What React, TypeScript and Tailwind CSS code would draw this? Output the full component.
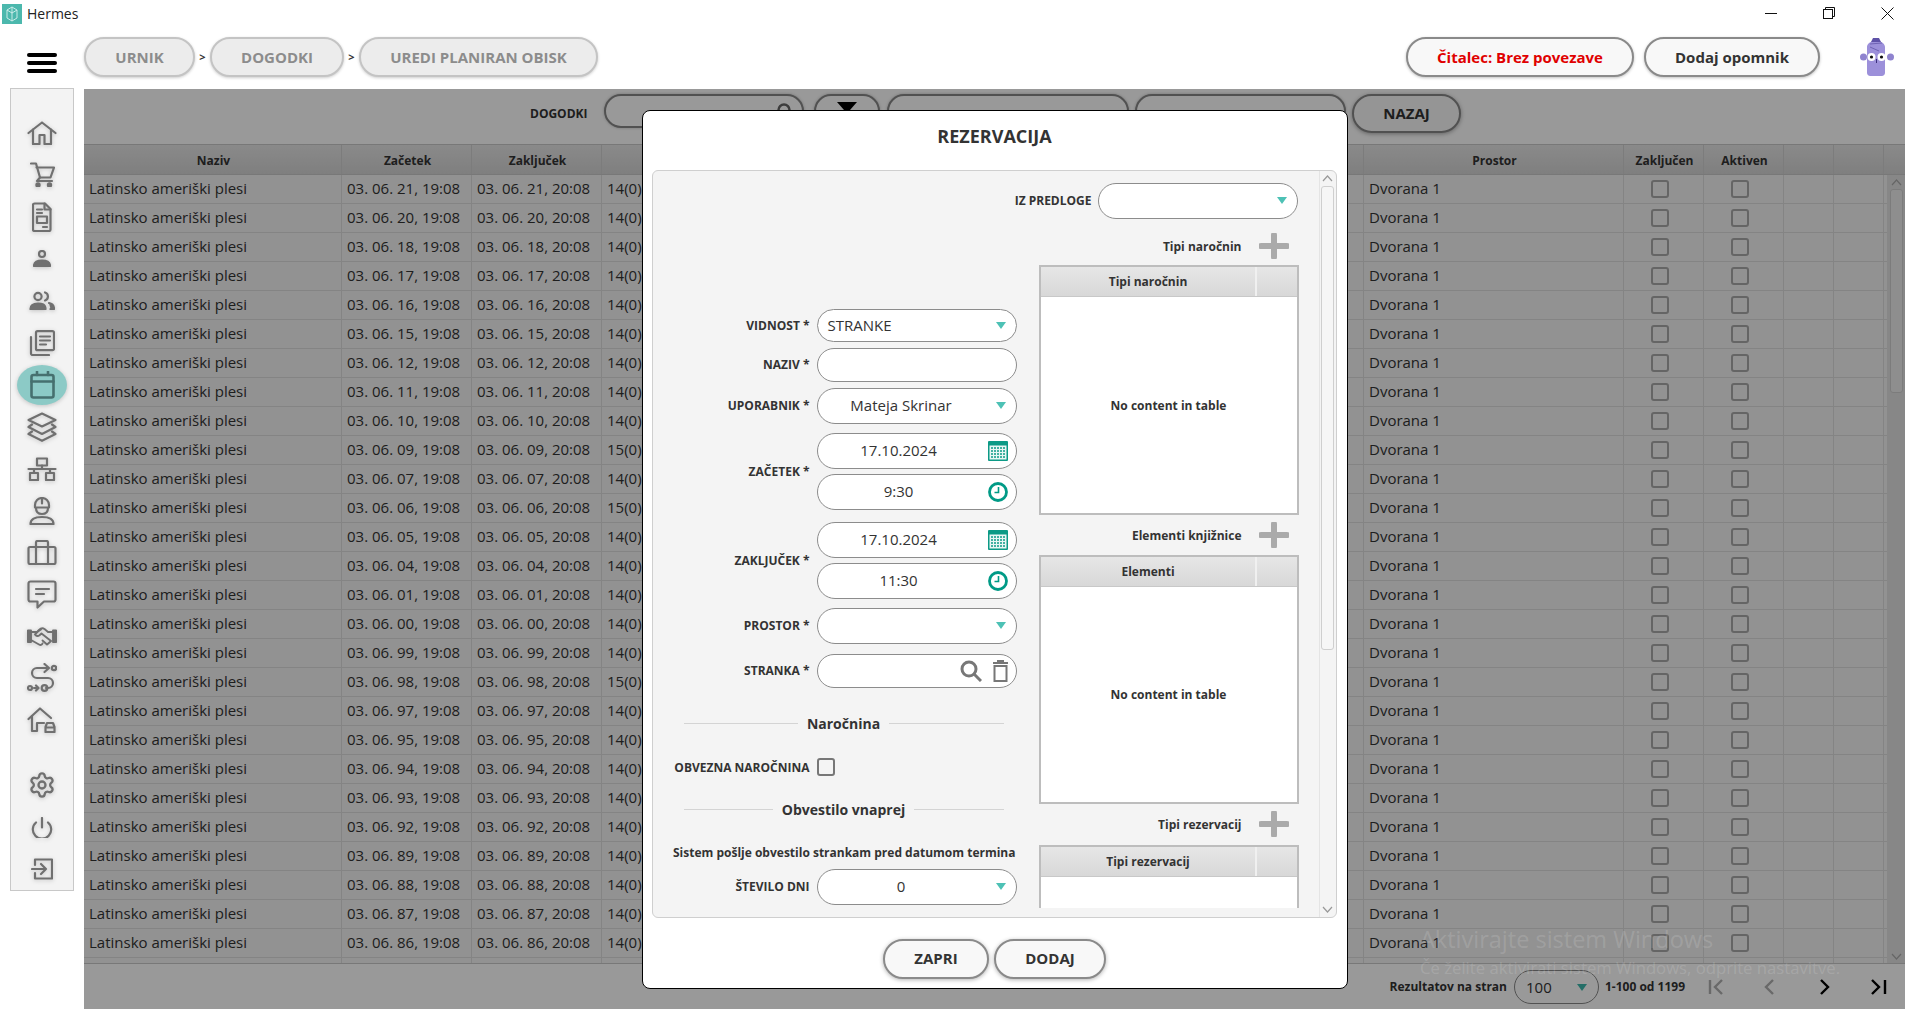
import React from "react";
import { Settings } from "lucide-react";

const days = ["21","20","18","17","16","15","12","11","10","09","07","06","05","04","01","00","99","98","97","95","94","93","92","89","88","87","86","85"];
const fifteen = ["09","06","98"];

function Svg({ w, h, children, stroke = "#707070", sw = 2.2 }: { w: number; h: number; children: React.ReactNode; stroke?: string; sw?: number }) {
  return (
    <svg width={w} height={h} viewBox={`0 0 ${w} ${h}`} fill="none" stroke={stroke} strokeWidth={sw} strokeLinecap="round" strokeLinejoin="round">
      {children}
    </svg>
  );
}

const sideIcons: React.ReactNode[] = [
  <Svg w={30} h={24}><path d="M1.5 12 15 1.5 28.5 12" /><path d="M6 8.5V23h6.5v-9h5v9H24V8.5" /></Svg>,
  <Svg w={25} h={25}><path d="M1 1.5h5l4 14-3 3.5h15" /><path d="M6.5 5.5H24l-3.500 10H10" /><circle cx="8" cy="23" r="1.600" fill="#707070" /><circle cx="19.500" cy="23" r="1.600" fill="#707070" /></Svg>,
  <Svg w={20} h={30}><path d="M2.500 1.500H13L18.500 7v20.500a1.500 1.500 0 0 1-1.500 1.500H2.500A1.500 1.500 0 0 1 1 27.500V3a1.500 1.500 0 0 1 1.500-1.500Z" /><path d="M5 7.500h5M5 11h5M12.500 1.500V7.500h6" /><rect x="5" y="14.500" width="10" height="6.500" /><path d="M11 25h4" /></Svg>,
  <Svg w={18} h={17}><circle cx="9" cy="4" r="3" /><path d="M1 16c0-4 4-5.500 8-5.500s8 1.500 8 5.500Z" fill="#707070" /></Svg>,
  <Svg w={26} h={19}><circle cx="9" cy="5.500" r="3.600" /><path d="M1.500 18c0-4.500 3.500-5.500 7.500-5.500s7.500 1 7.500 5.500Z" fill="#707070" /><path d="M16 1.500a4.200 4.200 0 0 1 0 8" /><path d="M20 12c3 .5 5 2.500 5 6h-3.500" fill="#707070" /></Svg>,
  <Svg w={26} h={26}><rect x="7" y="1.200" width="18" height="19" rx="1.500" /><path d="M11 6.500h10M11 10.500h10M11 14.500h6" /><path d="M2 7v16.500a1.500 1.500 0 0 0 1.500 1.500H20" /></Svg>,
  null,
  <Svg w={30} h={30}><path d="M15 1.500 28.500 8 15 14.500 1.500 8Z" /><path d="M5 12.500 1.500 15 15 22 28.500 15 25 12.500" /><path d="M5 19.500 1.500 22 15 28.800 28.500 22 25 19.500" /></Svg>,
  <Svg w={30} h={24}><rect x="10" y="1.500" width="10" height="7" /><path d="M15 8.500V12M1.500 12h27M7 12v3M23 12v3" /><rect x="3" y="16" width="8" height="7" /><rect x="19" y="16" width="8" height="7" /></Svg>,
  <Svg w={26} h={28}><path d="M6 10.500V8a7 7 0 0 1 14 0v2.500Z" /><path d="M13 1.500v5" /><path d="M7 11c0 4.500 3 6 6 6s6-1.500 6-6" /><path d="M1.500 27c0-5 5-7 11.500-7s11.500 2 11.500 7Z" /></Svg>,
  <Svg w={30} h={25}><rect x="1.500" y="7" width="27" height="17" rx="1.500" /><path d="M9 24V2.500A1.500 1.500 0 0 1 10.500 1h9A1.500 1.500 0 0 1 21 2.500V24" /></Svg>,
  <Svg w={30} h={29}><path d="M3.500 1.500h23a2 2 0 0 1 2 2v16a2 2 0 0 1-2 2H17l-6.500 6v-6h-7a2 2 0 0 1-2-2v-16a2 2 0 0 1 2-2Z" /><path d="M9 9h13M9 14h8" /></Svg>,
  <Svg w={30} h={19} sw={1.900}>
    <path d="M.8 3.500H4V15H.8ZM26 3.500h3.200V15H26Z" fill="#707070" />
    <path d="M4 5h6l4-2.500" />
    <path d="M26 5h-5l-3.500-3C15.500.8 13.500 1.500 12 3L8 7.500c1 1.800 3 2 4.500.8l2-1.800L24 14" />
    <path d="M4 13l8 4.500c1.500.9 3 .5 3.500-1" />
    <path d="M20 17.500l-4.500-4M23.500 14.500l-2.800 2.500" />
  </Svg>,
  <Svg w={30} h={30}><path d="M20 5H10a5 5 0 0 0 0 10h11a5 5 0 0 1 0 10h-2" /><path d="M17.500 1 22 5l-4.500 4" /><circle cx="27" cy="5" r="2.200" /><circle cx="3" cy="25" r="2" /><path d="M7 25h4M9 22.500 11.500 25 9 27.500" /><circle cx="17.500" cy="25" r="2.800" /></Svg>,
  <Svg w={30} h={26}><path d="M1.500 12 13 1.500l11 9.500" /><path d="M5 9v15h4M10 24v-8h7" /><path d="M18.500 25v-5l1.500-4h6l1.500 4v5ZM18.500 20.500h9" /></Svg>,
];

const bottomIcons: React.ReactNode[] = [
  <Settings className="w-[28px] h-[28px]" color="#707070" strokeWidth={2} />,
  <Svg w={22} h={21}><path d="M11 1v9.500" /><path d="M5 5.500a9.200 9.200 0 1 0 12 0" /></Svg>,
  <Svg w={22} h={22}><path d="M4 7V1.500h17v19H4V15" /><path d="M1 11h14M10 6l5 5-5 5" /></Svg>,
];

function Sidebar() {
  return (
    <div className="w-[64px] h-[803px] bg-[#f3f3f3] border border-[#c8c8c8] pt-[23px] flex flex-col items-center">
      {sideIcons.map((icon, i) => (
        <div key={i} className="relative h-[42px] w-full flex items-center justify-center drop-shadow-[0_1px_2px_rgba(0,0,0,0.2)]">
          {icon === null ? (
            <div className="w-[50px] h-[40px] rounded-[50%] bg-[#8ccac6] flex items-center justify-center">
              <Svg w={25} h={28} stroke="#46706f" sw={2.600}>
                <rect x="1.500" y="4" width="22" height="22.500" rx="2" />
                <path d="M1.500 10.500h22M7 .800V4M18 .800V4" />
              </Svg>
            </div>
          ) : (
            icon
          )}
        </div>
      ))}
      <div className="h-[23px]" />
      {bottomIcons.map((icon, i) => (
        <div key={i} className="h-[42px] w-full flex items-center justify-center drop-shadow-[0_1px_2px_rgba(0,0,0,0.2)]">
          {icon}
        </div>
      ))}
    </div>
  );
}

function Crumb({ className, children }: { className: string; children: React.ReactNode }) {
  return (
    <div className={`h-[40px] rounded-full bg-[#ececec] border-2 border-[#c4c4c4] flex items-center justify-center text-[15px] font-bold text-[#8c8c8c] shadow-[0_1px_3px_rgba(0,0,0,0.2)] ${className}`}>
      {children}
    </div>
  );
}

function Sep() {
  return <div className="w-[15px] text-center text-[11px] font-bold text-[#333]">&gt;</div>;
}

function TitleBar() {
  return (
    <div className="h-[28px] flex items-start justify-between pt-[3px] pl-[2px] pr-[3px]">
      <div className="flex items-center gap-[5px]">
        <svg width="20" height="20" viewBox="0 0 20 20">
          <rect width="20" height="20" fill="#4cb8ad" />
          <path d="M10 3l5 3v8l-5 3-5-3V6Z M10 3v14 M5 6l5 3 5-3" fill="none" stroke="#d6f1ee" strokeWidth="0.900" />
        </svg>
        <span className="text-[14px] text-[#222] leading-[20px] pt-[1px]">Hermes</span>
      </div>
      <div className="flex items-center h-[20px]">
        <div className="w-[58px] flex justify-center">
          <div className="w-[12px] h-px bg-[#111]" />
        </div>
        <div className="w-[58px] flex justify-center">
          <svg width="12" height="12" viewBox="0 0 12 12" fill="none" stroke="#111" strokeWidth="1">
            <rect x="0.500" y="2.500" width="9" height="9" />
            <path d="M2.500 2.500V.5h9v9H9.500" />
          </svg>
        </div>
        <div className="w-[58px] flex justify-center">
          <svg width="13" height="13" viewBox="0 0 13 13" stroke="#111" strokeWidth="1">
            <path d="M.5.5l12 12M12.500.5l-12 12" />
          </svg>
        </div>
      </div>
    </div>
  );
}

function Mascot() {
  return (
    <svg width="36" height="38" viewBox="0 0 36 38">
      <circle cx="4.500" cy="19" r="3.500" fill="#8f83cf" />
      <circle cx="31.500" cy="19" r="3.500" fill="#8f83cf" />
      <path d="M8 35V9c0-3 3-5 6-6l3-3 3 3c3 1 6 3 6 6v26c0 2-2 3-3 3H11c-1 0-3-1-3-3Z" fill="#9c90da" />
      <path d="M11 6l12-1M11 9l9 4" stroke="#6f62b4" strokeWidth="1" fill="none" />
      <path d="M14 0h6l2 4H12Z" fill="#5f52a8" />
      <circle cx="12.500" cy="19" r="4" fill="#fff" />
      <circle cx="22.500" cy="19" r="4" fill="#fff" />
      <circle cx="12.500" cy="19" r="1.600" fill="#111" />
      <circle cx="22.500" cy="19" r="1.600" fill="#111" />
      <path d="M17.500 21v4" stroke="#3b2f7a" strokeWidth="1" />
    </svg>
  );
}

function Header() {
  return (
    <div className="h-[60px] pt-[9px] flex items-start pr-[24px]">
      <div className="w-[84px] h-[40px] pl-[27px] pt-[12px] flex flex-col justify-center gap-[4px]">
        <div className="w-[30px] h-[4px] rounded-full bg-black" />
        <div className="w-[30px] h-[4px] rounded-full bg-black" />
        <div className="w-[30px] h-[4px] rounded-full bg-black" />
      </div>
      <div className="flex items-center">
        <Crumb className="w-[111px]">URNIK</Crumb>
        <Sep />
        <Crumb className="w-[134px]">DOGODKI</Crumb>
        <Sep />
        <Crumb className="w-[239px]">UREDI PLANIRAN OBISK</Crumb>
      </div>
      <div className="ml-auto flex items-center">
        <div className="w-[228px] h-[40px] rounded-full bg-[#f8f8f8] border-2 border-[#8a8a8a] flex items-center justify-center text-[15px] font-bold text-[#e00000] shadow-[0_1px_3px_rgba(0,0,0,0.25)]">Čitalec: Brez povezave</div>
        <div className="ml-[10px] w-[176px] h-[40px] rounded-full bg-[#f8f8f8] border-2 border-[#8a8a8a] flex items-center justify-center text-[15px] font-bold text-[#333] shadow-[0_1px_3px_rgba(0,0,0,0.25)]">Dodaj opomnik</div>
        <div className="ml-[39px]"><Mascot /></div>
      </div>
    </div>
  );
}

function Toolbar() {
  const pill = "h-[34px] rounded-full bg-white border-2 border-[#888] shadow-[0_0_3px_rgba(0,0,0,0.25)]";
  return (
    <div className="h-[55px] pt-[5px] flex items-start bg-white">
      <div className="w-[520px] h-[34px] pl-[446px] pt-[5px] flex items-center text-[12px] font-bold text-[#333]">DOGODKI</div>
      <div className={`${pill} w-[200px] flex items-center justify-end pr-[8px]`}>
        <svg width="18" height="18" viewBox="0 0 18 18" fill="none" stroke="#666" strokeWidth="2.500"><circle cx="8" cy="8" r="5.500" /><path d="M12 12l5 5" /></svg>
      </div>
      <div className={`${pill} w-[66px] ml-[10px] flex items-center justify-center`}>
        <svg width="20" height="18" viewBox="0 0 20 18" fill="#000"><path d="M0 0h20l-7 8v10l-6-3V8Z" /></svg>
      </div>
      <div className={`${pill} w-[242px] ml-[7px]`} />
      <div className={`${pill} w-[211px] ml-[6px]`} />
      <div className="w-[109px] h-[39px] ml-[6px] rounded-full bg-[#f8f8f8] border-2 border-[#888] flex items-center justify-center text-[15px] font-bold text-[#333] shadow-[0_1px_4px_rgba(0,0,0,0.35)]">NAZAJ</div>
    </div>
  );
}

const colW = ["w-[258px]", "w-[130px]", "w-[130px]", "w-[762px]", "w-[260px]", "w-[80px]", "w-[80px]", "w-[50px]", "w-[50px]"];

function HeadCell({ i, children }: { i: number; children?: React.ReactNode }) {
  return (
    <div className={`${colW[i]} h-full shrink-0 border-r border-[#cfcfcf] pt-[2px] pl-[2px] flex items-center justify-center text-[12px] font-bold text-[#333]`}>
      {children}
    </div>
  );
}

function Chk() {
  return <div className="w-[18px] h-[18px] rounded-[3px] border-2 border-[#a8a8a8] bg-[#f3f3f3]" />;
}

function Row({ d }: { d: string }) {
  const cell = "h-full shrink-0 border-r border-[#dcdcdc] flex items-center";
  const n = fifteen.includes(d) ? "15(0)" : "14(0)";
  return (
    <div className="h-[29px] shrink-0 flex border-b border-[#dcdcdc] bg-[#f3f3f3] text-[15px] text-[#333]">
      <div className={`${cell} ${colW[0]} pl-[5px] pb-[2px]`}>Latinsko ameriški plesi</div>
      <div className={`${cell} ${colW[1]} pl-[5px] pb-[2px]`}>03. 06. {d}, 19:08</div>
      <div className={`${cell} ${colW[2]} pl-[5px] pb-[2px]`}>03. 06. {d}, 20:08</div>
      <div className={`${cell} ${colW[3]} pl-[5px] pb-[2px]`}>{n}</div>
      <div className={`${cell} ${colW[4]} pl-[5px] pb-[2px]`}>Dvorana 1</div>
      <div className={`${cell} ${colW[5]} pl-[27px]`}><Chk /></div>
      <div className={`${cell} ${colW[6]} pl-[27px]`}><Chk /></div>
      <div className={`${cell} ${colW[7]}`} />
      <div className={`${cell} ${colW[8]}`} />
    </div>
  );
}

function Chevron({ dir, color = "#999" }: { dir: "up" | "down"; color?: string }) {
  return (
    <svg width="11" height="7" viewBox="0 0 11 7" fill="none" stroke={color} strokeWidth="1.200">
      <path d={dir === "up" ? "M1 6l4.500-5L10 6" : "M1 1l4.500 5L10 1"} />
    </svg>
  );
}

function Table() {
  return (
    <div className="h-[820px] flex flex-col border-t border-[#c8c8c8] border-b bg-[#f3f3f3] overflow-hidden">
      <div className="h-[30px] shrink-0 flex border-b border-[#c8c8c8] bg-gradient-to-b from-[#e6e6e6] to-[#d4d4d4]">
        <HeadCell i={0}>Naziv</HeadCell>
        <HeadCell i={1}>Začetek</HeadCell>
        <HeadCell i={2}>Zaključek</HeadCell>
        <HeadCell i={3} />
        <HeadCell i={4}>Prostor</HeadCell>
        <HeadCell i={5}>Zaključen</HeadCell>
        <HeadCell i={6}>Aktiven</HeadCell>
        <HeadCell i={7} />
        <HeadCell i={8} />
      </div>
      <div className="flex-1 flex min-h-0">
        <div className="flex-1 min-w-0 flex flex-col overflow-hidden">
          {days.map((d) => <Row key={d} d={d} />)}
        </div>
        <div className="w-[18px] shrink-0 bg-[#e2e2e2] flex flex-col items-center pt-[4px] pb-[3px]">
          <Chevron dir="up" color="#aaa" />
          <div className="mt-[3px] w-[13px] h-[204px] rounded-[3px] bg-[#ededed] border border-[#cfcfcf]" />
          <div className="flex-1" />
          <Chevron dir="down" color="#aaa" />
        </div>
      </div>
    </div>
  );
}

function PageIcon({ kind, color }: { kind: "first" | "prev" | "next" | "last"; color: string }) {
  const d = {
    first: "M2 2v14M14 2L7 9l7 7",
    prev: "M11 2L4 9l7 7",
    next: "M5 2l7 7-7 7",
    last: "M2 2l7 7-7 7M15 2v14",
  }[kind];
  return (
    <div className="w-[54px] flex justify-center">
      <svg width="17" height="18" viewBox="0 0 17 18" fill="none" stroke={color} strokeWidth="2.400"><path d={d} /></svg>
    </div>
  );
}

function Footer() {
  return (
    <div className="h-[45px] pt-[1px] flex items-center justify-end bg-white">
      <span className="text-[12px] font-bold text-[#333]">Rezultatov na stran</span>
      <div className="ml-[7px] w-[85px] h-[34px] rounded-full border border-[#888] flex items-center text-[15px] text-[#333] pl-[11px]">
        <span className="flex-1">100</span>
        <svg className="mr-[11px]" width="10" height="7" viewBox="0 0 10 7"><path d="M0 0h10L5 7Z" fill="#3cb8ac" /></svg>
      </div>
      <span className="ml-[6px] mr-[4px] text-[12px] font-bold text-[#333]">1-100 od 1199</span>
      <PageIcon kind="first" color="#b0b0b0" />
      <PageIcon kind="prev" color="#b0b0b0" />
      <PageIcon kind="next" color="#000" />
      <PageIcon kind="last" color="#000" />
    </div>
  );
}

function Arrow({ className = "" }: { className?: string }) {
  return (
    <svg className={className} width="10" height="7" viewBox="0 0 10 7"><path d="M0 0h10L5 7Z" fill="#4dc1b5" /></svg>
  );
}

const field = "rounded-full border-[1.500px] border-[#8c8c8c] bg-white flex items-center text-[15px] text-[#333] w-[200px]";

function Label({ children }: { children: React.ReactNode }) {
  return <div className="w-[157px] shrink-0 pt-[1px] text-right text-[12px] font-bold text-[#333] mr-[7px] whitespace-nowrap">{children}</div>;
}

function SelectField({ className, children }: { className: string; children?: React.ReactNode }) {
  return (
    <div className={`${field} ${className}`}>
      <div className="flex-1 text-center">{children}</div>
      <Arrow className="ml-[11px] mr-[10px]" />
    </div>
  );
}

function CalIcon() {
  return (
    <svg className="ml-[8px] mr-[8px]" width="20" height="21" viewBox="0 0 20 21">
      <rect x="0" y="1" width="20" height="20" rx="1" fill="#0c9a86" />
      <rect x="1.500" y="5.500" width="17" height="14" fill="#e9f6f4" />
      <path d="M3 8h14M3 11h14M3 14h14M3 17h14" stroke="#0c9a86" strokeWidth="1.600" strokeDasharray="2 1" />
    </svg>
  );
}

function ClockIcon() {
  return (
    <svg className="ml-[8px] mr-[8px]" width="20" height="20" viewBox="0 0 20 20" fill="none" stroke="#009a86">
      <circle cx="10" cy="10" r="8.500" strokeWidth="2.800" />
      <path d="M10.500 5v5.500H6.500" strokeWidth="1.600" />
    </svg>
  );
}

function DateField({ className, children, icon }: { className: string; children: React.ReactNode; icon: React.ReactNode }) {
  return (
    <div className={`${field} ${className}`}>
      <div className="flex-1 text-center">{children}</div>
      {icon}
    </div>
  );
}

function Section({ children, className }: { children: React.ReactNode; className: string }) {
  return (
    <div className={`ml-[31px] w-[320px] h-[20px] flex items-center gap-[9px] text-[14px] font-bold text-[#333] ${className}`}>
      <div className="flex-1 h-px bg-[#d4d4d4]" />
      <span>{children}</span>
      <div className="flex-1 h-px bg-[#d4d4d4]" />
    </div>
  );
}

function FormColumn() {
  return (
    <div className="w-[386px] shrink-0 pt-[90px] flex flex-col">
      <div className="flex items-center">
        <Label>VIDNOST *</Label>
        <div className={`${field} h-[33px] pl-[10px]`}>
          <span className="flex-1">STRANKE</span>
          <Arrow className="mr-[10px]" />
        </div>
      </div>
      <div className="flex items-center mt-[6px]">
        <Label>NAZIV *</Label>
        <div className={`${field} h-[34px]`} />
      </div>
      <div className="flex items-center mt-[6px]">
        <Label>UPORABNIK *</Label>
        <SelectField className="h-[36px]">Mateja Skrinar</SelectField>
      </div>
      <div className="flex items-center mt-[9px]">
        <Label>ZAČETEK *</Label>
        <div className="flex flex-col gap-[5px]">
          <DateField className="h-[36px]" icon={<CalIcon />}>17.10.2024</DateField>
          <DateField className="h-[36px]" icon={<ClockIcon />}>9:30</DateField>
        </div>
      </div>
      <div className="flex items-center mt-[12px]">
        <Label>ZAKLJUČEK *</Label>
        <div className="flex flex-col gap-[5px]">
          <DateField className="h-[36px]" icon={<CalIcon />}>17.10.2024</DateField>
          <DateField className="h-[36px]" icon={<ClockIcon />}>11:30</DateField>
        </div>
      </div>
      <div className="flex items-center mt-[9px]">
        <Label>PROSTOR *</Label>
        <SelectField className="h-[36px]" />
      </div>
      <div className="flex items-center mt-[10px]">
        <Label>STRANKA *</Label>
        <div className={`${field} h-[34px] justify-end pr-[7px] gap-[10px]`}>
          <svg width="22" height="22" viewBox="0 0 22 22" fill="none" stroke="#777" strokeWidth="3"><circle cx="9" cy="9" r="7" /><path d="M14 14l7 7" /></svg>
          <svg width="17" height="22" viewBox="0 0 17 22" fill="none" stroke="#777"><path d="M1 3h15M5 1h7" strokeWidth="2" /><rect x="2.500" y="6" width="12" height="15" strokeWidth="2" /></svg>
        </div>
      </div>
      <Section className="mt-[26px]">Naročnina</Section>
      <div className="flex items-center mt-[24px]">
        <Label>OBVEZNA NAROČNINA</Label>
        <div className="w-[18px] h-[18px] rounded-[3px] border-2 border-[#777] bg-[#f4f4f4]" />
      </div>
      <Section className="mt-[23px]">Obvestilo vnaprej</Section>
      <div className="mt-[23px] h-[20px] w-[363px] flex items-center justify-end text-[12px] font-bold text-[#333] whitespace-nowrap">Sistem pošlje obvestilo strankam pred datumom termina</div>
      <div className="flex items-center mt-[6px]">
        <Label>ŠTEVILO DNI</Label>
        <SelectField className="h-[36px]">0</SelectField>
      </div>
    </div>
  );
}

function PlusRow({ label, className, labelClass }: { label: string; className: string; labelClass: string }) {
  return (
    <div className={`flex items-center justify-end pr-[10px] ${className}`}>
      <span className={`text-[12px] font-bold text-[#333] mr-[17px] ${labelClass}`}>{label}</span>
      <svg width="30" height="26" viewBox="0 0 30 26"><path d="M15 2v22M2 13h26" stroke="#aaa" strokeWidth="6" strokeLinecap="round" /></svg>
    </div>
  );
}

function SubTable({ title, className }: { title: string; className: string }) {
  return (
    <div className={`w-[260px] shrink-0 border-2 border-[#bdbdbd] bg-white flex flex-col ${className}`}>
      <div className="h-[30px] shrink-0 flex border-b border-[#c8c8c8] bg-gradient-to-b from-[#e6e6e6] to-[#d8d8d8]">
        <div className="w-[216px] h-full pt-[2px] pl-[1px] flex items-center justify-center border-r-2 border-[#f0f0f0] text-[12px] font-bold text-[#333]">{title}</div>
      </div>
      <div className="flex-1 flex items-center justify-center pt-[2px] text-[12px] font-bold text-[#333]">No content in table</div>
    </div>
  );
}

function RightColumn() {
  return (
    <div className="w-[260px] shrink-0 flex flex-col">
      <PlusRow label="Tipi naročnin" className="h-[46px] pt-[8px]" labelClass="pt-[2px]" />
      <SubTable title="Tipi naročnin" className="h-[250px]" />
      <PlusRow label="Elementi knjižnice" className="h-[40px]" labelClass="pt-[2px]" />
      <SubTable title="Elementi" className="h-[249px]" />
      <PlusRow label="Tipi rezervacij" className="h-[41px]" labelClass="pt-[2px]" />
      <SubTable title="Tipi rezervacij" className="h-[250px]" />
    </div>
  );
}

function Modal() {
  return (
    <div className="w-[706px] h-[879px] rounded-[8px] border border-black bg-white flex flex-col items-center">
      <div className="h-[59px] shrink-0 w-full flex items-center justify-center text-[18px] font-bold text-[#333] pb-[8px]">REZERVACIJA</div>
      <div className="w-[685px] h-[748px] -ml-[1px] rounded-[6px] border border-[#cfcfcf] bg-[#f4f4f4] flex overflow-hidden shrink-0">
        <div className="flex-1 min-w-0 pb-[9px] flex flex-col">
          <div className="flex-1 min-h-0 overflow-hidden pt-[12px]">
            <div className="h-[36px] flex items-center justify-end pr-[21px]">
              <span className="text-[12px] font-bold text-[#333] pt-[1px] mr-[6px]">IZ PREDLOGE</span>
              <SelectField className="h-[36px]" />
            </div>
            <div className="flex">
              <FormColumn />
              <RightColumn />
            </div>
          </div>
        </div>
        <div className="w-[17px] shrink-0 border-l border-[#e4e4e4] flex flex-col items-center pt-[4px] pb-[4px]">
          <Chevron dir="up" />
          <div className="mt-[4px] w-[13px] h-[464px] rounded-[3px] bg-[#f6f6f6] border border-[#cfcfcf]" />
          <div className="flex-1" />
          <Chevron dir="down" />
        </div>
      </div>
      <div className="flex-1 flex items-start pt-[21px] gap-[5px]">
        <div className="w-[106px] h-[40px] rounded-full bg-[#f8f8f8] border-2 border-[#8a8a8a] flex items-center justify-center text-[15px] font-bold text-[#333] shadow-[0_1px_4px_rgba(0,0,0,0.3)]">ZAPRI</div>
        <div className="w-[112px] h-[40px] rounded-full bg-[#f8f8f8] border-2 border-[#8a8a8a] flex items-center justify-center text-[15px] font-bold text-[#333] shadow-[0_1px_4px_rgba(0,0,0,0.3)]">DODAJ</div>
      </div>
    </div>
  );
}

export default function App() {
  return (
    <div className="w-[1919px] h-[1023px] overflow-hidden bg-white font-['Open_Sans',sans-serif]">
      <TitleBar />
      <Header />
      <div className="flex">
        <div className="w-[84px] shrink-0 pl-[10px]">
          <Sidebar />
        </div>
        <div className="relative w-[1821px] h-[920px] mt-[1px] bg-white overflow-hidden">
          <Toolbar />
          <Table />
          <Footer />
          <div className="absolute inset-0 bg-black/40 flex items-center justify-center">
            <Modal />
          </div>
          <div className="absolute left-[1336px] top-[832px] pointer-events-none text-white/15 whitespace-nowrap">
            <div className="text-[23.500px] leading-[36px]">Aktivirajte sistem Windows</div>
            <div className="text-[16.700px] leading-[22px]">Če želite aktivirati sistem Windows, odprite nastavitve.</div>
          </div>
        </div>
      </div>
    </div>
  );
}
